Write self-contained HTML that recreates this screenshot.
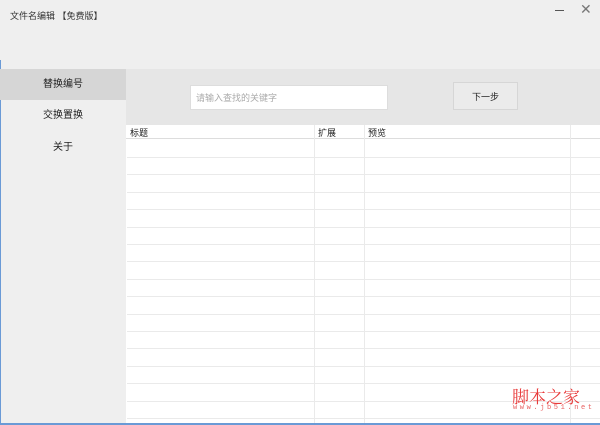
<!DOCTYPE html><html><head><style>
body{margin:0;width:600px;height:425px;overflow:hidden;background:#efefef;font-family:"Liberation Sans","Noto Sans CJK SC",sans-serif;position:relative}
.a{position:absolute}
.t{font-size:9px;color:#333}
.nav{left:0;width:126px;height:31px;line-height:31px;text-align:center;font-size:10px;color:#222}
.row{left:127px;right:0;height:1px;background:#eaeaea}
.col{top:125px;bottom:2px;width:1px;background:#eaeaea}
</style></head><body>
<div class="a t" style="left:10px;top:9px">文件名编辑 【免费版】</div>
<div class="a" style="left:555px;top:10px;width:9px;height:1px;background:#555"></div>
<div class="a" style="left:580px;top:1px;font-size:14px;color:#777">✕</div>
<div class="a" style="left:0;top:60px;width:1px;height:365px;background:#6a9ad6"></div>
<div class="a nav" style="top:69px;background:#d6d6d6">替换编号</div>
<div class="a nav" style="top:100px">交换置换</div>
<div class="a nav" style="top:132px">关于</div>
<div class="a" style="left:126px;top:69px;right:0;height:56px;background:#e6e6e6"></div>
<div class="a" style="left:190px;top:85px;height:25px;background:#fff;border:1px solid #ddd;font-size:9px;color:#aaa;line-height:25px;padding-left:5px;box-sizing:border-box;width:198px">请输入查找的关键字</div>
<div class="a" style="left:453px;top:82px;width:65px;height:28px;border:1px solid #d6d6d6;background:#ebebeb;font-size:9px;line-height:28px;text-align:center;color:#222;box-sizing:border-box">下一步</div>
<div class="a" style="left:126px;top:125px;right:0;bottom:2px;background:#fff"></div>
<div class="a" style="left:126px;top:125px;right:0;height:14px;border-bottom:1px solid #ddd;box-sizing:border-box"></div>
<div class="a t" style="left:130px;top:126px;color:#222">标题</div>
<div class="a t" style="left:318px;top:126px;color:#222">扩展</div>
<div class="a t" style="left:368px;top:126px;color:#222">预览</div>
<div class="a col" style="left:314px"></div><div class="a col" style="left:364px"></div><div class="a col" style="left:570px"></div>
<div class="a row" style="top:157px"></div><div class="a row" style="top:174px"></div><div class="a row" style="top:192px"></div><div class="a row" style="top:209px"></div><div class="a row" style="top:227px"></div><div class="a row" style="top:244px"></div><div class="a row" style="top:261px"></div><div class="a row" style="top:279px"></div><div class="a row" style="top:296px"></div><div class="a row" style="top:314px"></div><div class="a row" style="top:331px"></div><div class="a row" style="top:348px"></div><div class="a row" style="top:366px"></div><div class="a row" style="top:383px"></div><div class="a row" style="top:401px"></div><div class="a row" style="top:418px"></div>
<div class="a" style="left:512px;top:383px;font-size:17px;color:#e83a3a;letter-spacing:0px;font-family:'Noto Serif CJK SC',serif">脚本之家</div>
<div class="a" style="left:513px;top:404px;font-size:7px;color:#e86060;letter-spacing:2.6px;font-family:'Liberation Mono',monospace">www.jb51.net</div>
<div class="a" style="left:0;bottom:0;width:600px;height:2px;background:#6a9ad6"></div>
</body></html>
